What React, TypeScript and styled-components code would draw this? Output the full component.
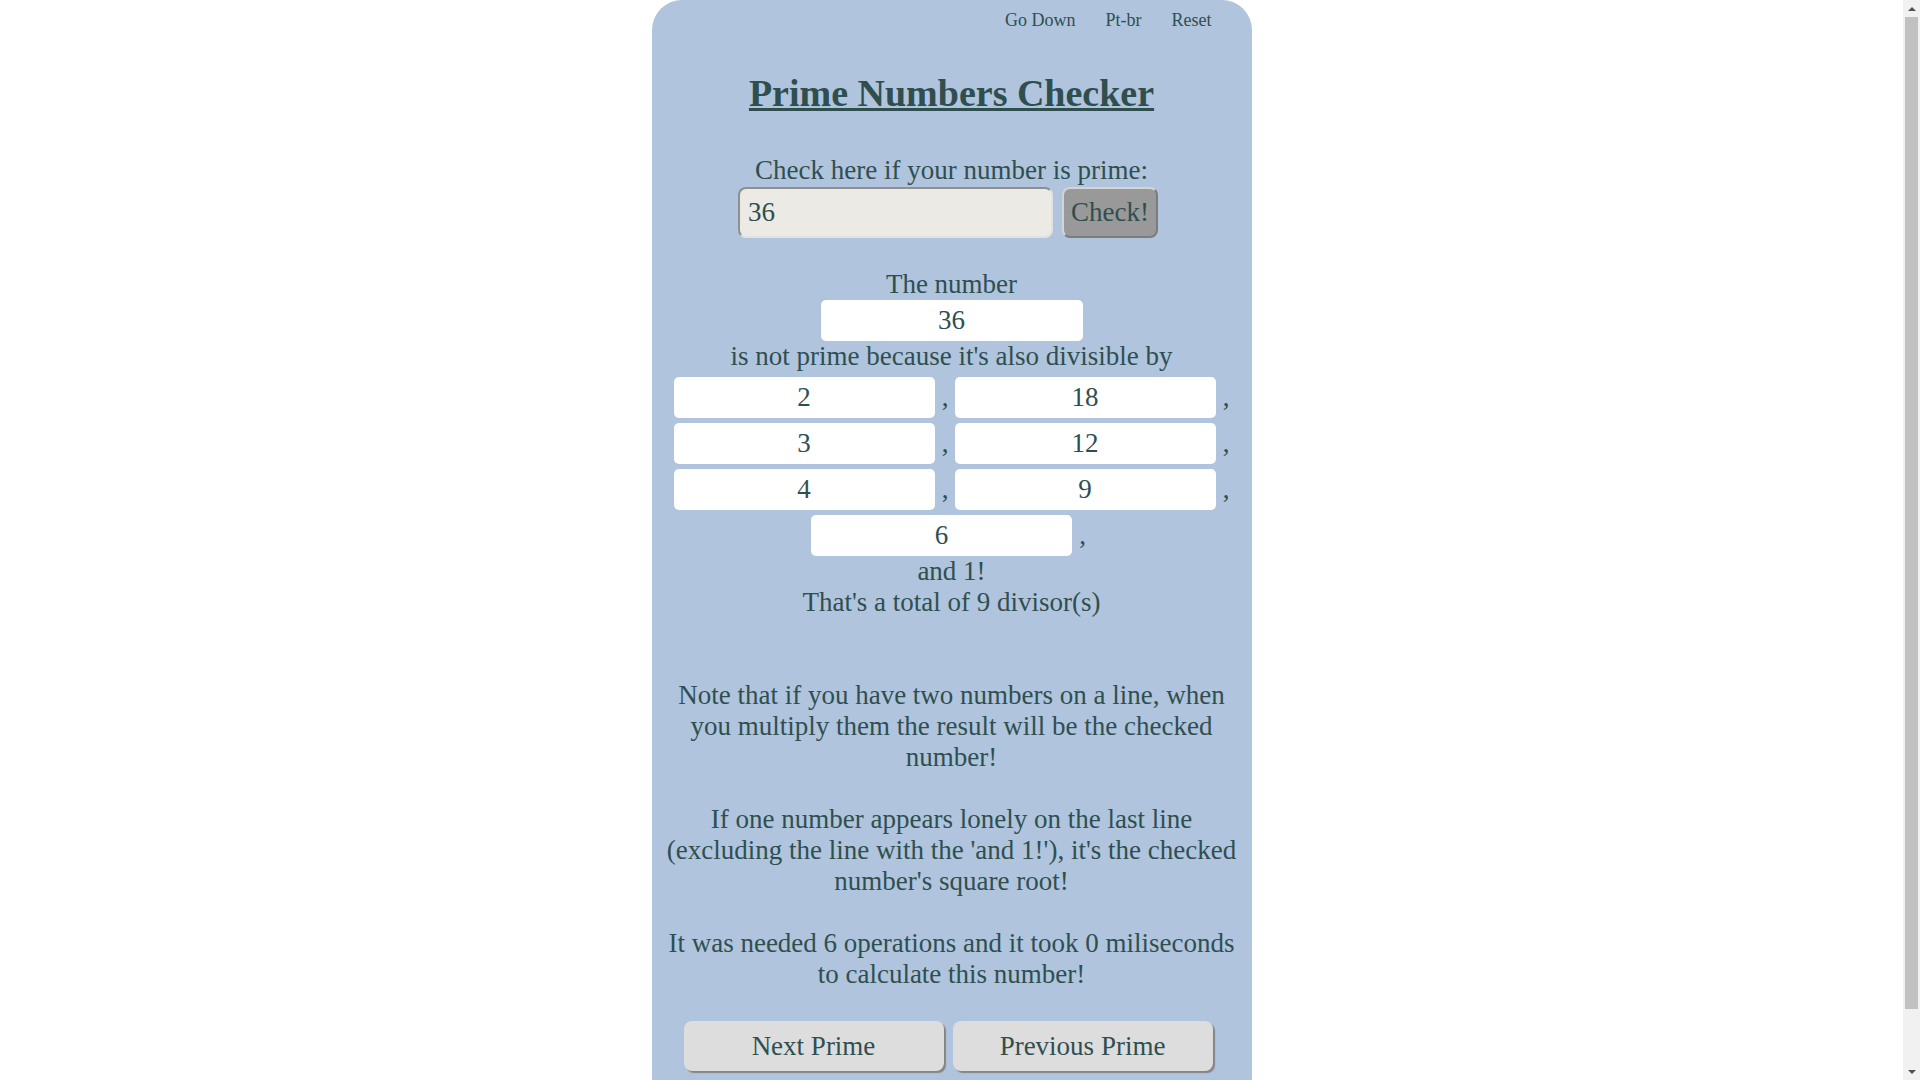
import { Fragment } from "react"
import styled, { createGlobalStyle } from "styled-components"

const GlobalStyle = createGlobalStyle`
	html {
		overflow-y: scroll;
	}
	body {
		margin: 0 17px 0 0;
		background: #ffffff;
		font-family: "Liberation Serif", "Times New Roman", serif;
	}
`

/* drawn scrollbar, the headless page hides the native one */
const ScrollTrack = styled.div`
	position: fixed;
	top: 0;
	right: 0;
	bottom: 0;
	width: 17px;
	display: flex;
	flex-direction: column;
	align-items: center;
	background: #f1f1f1;
`

const ScrollArrow = styled.div<{ $down?: boolean }>`
	height: 17px;
	width: 17px;
	display: flex;
	align-items: center;
	justify-content: center;
	&::before {
		content: "";
		border-left: 4px solid transparent;
		border-right: 4px solid transparent;
		${(p) => (p.$down ? "border-top: 4px solid #505050;" : "border-bottom: 4px solid #505050;")}
	}
`

const ScrollThumb = styled.div`
	width: 13px;
	height: 992px;
	background: #c1c1c1;
`

const ScrollGap = styled.div`
	flex: 1;
`

const Panel = styled.main`
	width: 600px;
	min-height: 1140px;
	margin: 0 auto;
	box-sizing: border-box;
	padding: 0 12px 69px;
	background: #b0c4de;
	border-radius: 30px 30px 0 0;
	color: #2f4f4f;
	text-align: center;
	font-size: 27px;
	line-height: 31px;
`

const Nav = styled.nav`
	display: flex;
	justify-content: flex-end;
	gap: 30px;
	padding: 10px 28px 0 0;
	font-size: 18px;
	line-height: 21px;
`

const NavLink = styled.a`
	color: inherit;
	text-decoration: none;
	cursor: pointer;
`

const Title = styled.h1`
	margin: 40px 0 0;
	font-size: 38px;
	line-height: 44px;
	font-weight: bold;
	text-decoration: underline;
`

const Line = styled.p<{ $gap?: number }>`
	margin: ${(p) => p.$gap ?? 0}px 0 0;
`

const FormRow = styled.div`
	display: flex;
	justify-content: center;
	gap: 9px;
	margin-top: 1px;
	padding-right: 7px;
`

const NumberInput = styled.input`
	width: 315px;
	height: 51px;
	box-sizing: border-box;
	padding: 0 8px;
	border: 2px solid;
	border-color: #8f8f8f #e2e2e2 #e2e2e2 #8f8f8f;
	border-radius: 8px;
	background: #ebeae4;
	color: #2f4f4f;
	font: inherit;
	outline: none;
`

const CheckButton = styled.button`
	width: 96px;
	height: 51px;
	box-sizing: border-box;
	padding: 0;
	border: 2px solid;
	border-color: #d4d4d4 #7c7c7c #7c7c7c #d4d4d4;
	border-radius: 8px;
	background: #999999;
	color: #2f4f4f;
	font: inherit;
	cursor: pointer;
`

const ValueBox = styled.div<{ $width?: number }>`
	width: ${(p) => p.$width ?? 261}px;
	height: 41px;
	line-height: 41px;
	flex-shrink: 0;
	background: #ffffff;
	border-radius: 5px;
`

const CenterBox = styled(ValueBox)`
	margin: 0 auto;
`

const DivisorList = styled.div`
	display: flex;
	flex-direction: column;
	gap: 5px;
	padding-top: 5px;
`

const DivisorRow = styled.div<{ $pair: boolean }>`
	display: flex;
	justify-content: center;
	align-items: baseline;
	padding-left: ${(p) => (p.$pair ? 6 : 0)}px;
`

const Comma = styled.span`
	width: 7px;
	padding: 0 6px 0 7px;
`

const ButtonRow = styled.div`
	display: flex;
	justify-content: center;
	gap: 9px;
	margin-top: 31px;
	padding-right: 7px;
`

const NavButton = styled.button`
	width: 260px;
	height: 50px;
	padding: 0;
	border: none;
	border-radius: 8px;
	background: #dddddd;
	box-shadow: 2px 2px 1px #858585;
	color: #2f4f4f;
	font: inherit;
	cursor: pointer;
`

const divisorRows = [[2, 18], [3, 12], [4, 9], [6]]

export default function App() {
	return (
		<>
			<GlobalStyle />
			<Panel>
				<Nav>
					<NavLink>Go Down</NavLink>
					<NavLink>Pt-br</NavLink>
					<NavLink>Reset</NavLink>
				</Nav>

				<Title>Prime Numbers Checker</Title>

				<Line $gap={40}>Check here if your number is prime:</Line>
				<FormRow>
					<NumberInput defaultValue="36" />
					<CheckButton>Check!</CheckButton>
				</FormRow>

				{/* Result */}
				<Line $gap={31}>The number</Line>
				<CenterBox $width={262}>36</CenterBox>
				<Line>is not prime because it's also divisible by</Line>
				<DivisorList>
					{divisorRows.map((row, i) => (
						<DivisorRow key={i} $pair={row.length > 1}>
							{row.map((d) => (
								<Fragment key={d}>
									<ValueBox>{d}</ValueBox>
									<Comma>,</Comma>
								</Fragment>
							))}
						</DivisorRow>
					))}
				</DivisorList>
				<Line>and 1!</Line>
				<Line>That's a total of 9 divisor(s)</Line>

				{/* Notes */}
				<Line $gap={62}>
					Note that if you have two numbers on a line, when you multiply them the result will be the checked number!
				</Line>
				<Line $gap={31}>
					If one number appears lonely on the last line (excluding the line with the 'and 1!'), it's the checked
					number's square root!
				</Line>
				<Line $gap={31}>It was needed 6 operations and it took 0 miliseconds to calculate this number!</Line>

				<ButtonRow>
					<NavButton>Next Prime</NavButton>
					<NavButton>Previous Prime</NavButton>
				</ButtonRow>
			</Panel>

			<ScrollTrack>
				<ScrollArrow />
				<ScrollThumb />
				<ScrollGap />
				<ScrollArrow $down />
			</ScrollTrack>
		</>
	)
}
